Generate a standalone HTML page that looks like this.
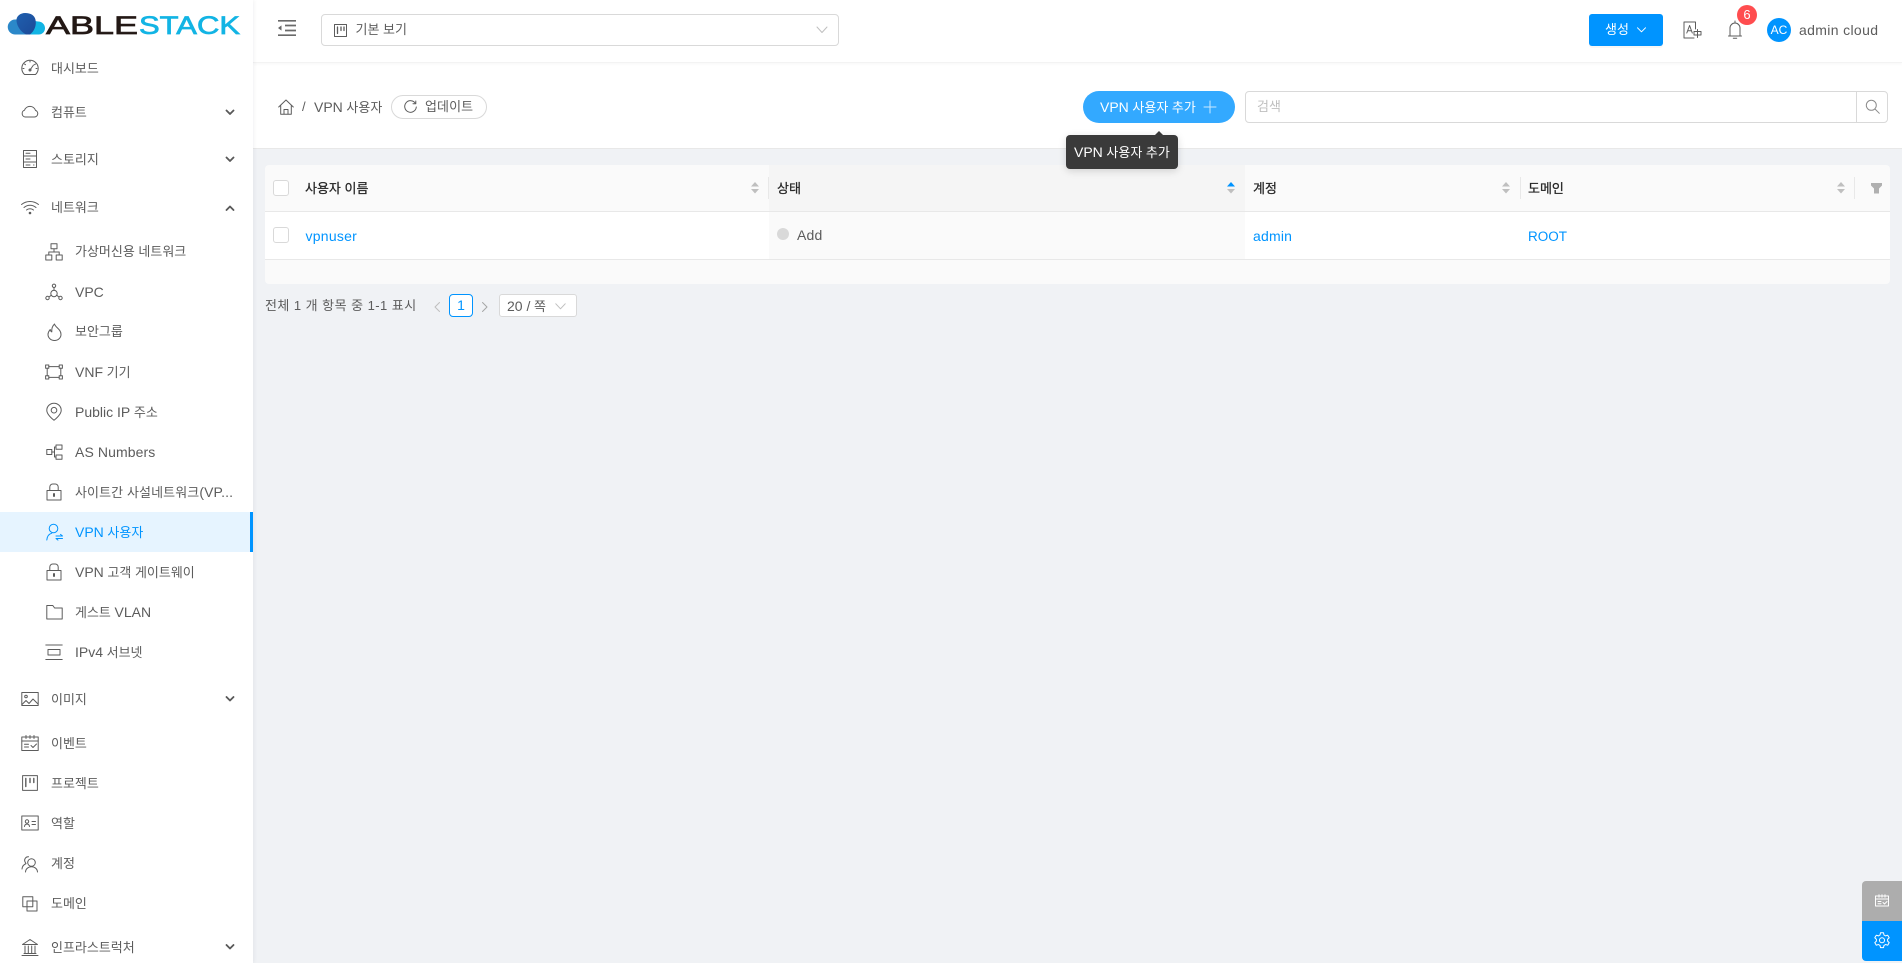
<!DOCTYPE html>
<html lang="ko"><head><meta charset="utf-8"><title>VPN 사용자</title>
<style>
*{box-sizing:border-box}
html,body{margin:0;padding:0;width:1902px;height:963px;overflow:hidden;background:#f0f2f5;font-family:"Liberation Sans","Noto Sans CJK KR",sans-serif;font-size:13px;color:#5c5c5c}
.a,.t,svg.i{position:absolute}
.t{line-height:20px;height:20px;white-space:nowrap}
.l{font-size:14px}
svg.i{fill:none;stroke:#5c5c5c;stroke-width:1;stroke-linecap:round;stroke-linejoin:round;overflow:visible}
.blue{color:#0094ff}
.h{color:#262626;font-weight:400;-webkit-text-stroke:.25px #262626}
</style></head><body>

<!-- main panels -->
<div class="a" style="left:253px;top:62px;width:1649px;height:87px;background:#fff;border-bottom:1px solid #e8e8e8"></div>
<div class="a" style="left:253px;top:0;width:1649px;height:63px;background:#fff;border-bottom:1px solid #f3f3f3;box-shadow:0 1px 3px rgba(0,21,41,.04)"></div>

<!-- sidebar -->
<div class="a" style="left:0;top:0;width:253px;height:963px;background:#fff;box-shadow:1px 0 4px rgba(0,21,41,.06)"></div>
<div class="a" style="left:0;top:512px;width:253px;height:40px;background:#e6f4ff"></div>
<div class="a" style="left:250px;top:512px;width:3px;height:40px;background:#0094ff"></div>

<!-- logo -->
<svg class="a" style="left:0;top:0" width="250" height="50">
<defs><linearGradient id="g" x1="0" y1="0" x2="1" y2="1"><stop offset="0" stop-color="#1f5fae"/><stop offset="1" stop-color="#1c4a98"/></linearGradient></defs>
<path d="M24 34.500H15.500a7.500 7.500 0 0 1-.5-15c3-.3 5.500.5 7.500 2.500l5 12.500z" fill="#2b88c9"/>
<path d="M26 34.500h12.500a6.300 6.300 0 0 0 6.500-6.300 6.800 6.800 0 0 0-7-6.700l-6-1z" fill="#12b4e4"/>
<path d="M16.500 21c-.5-4.800 3.800-8 8.500-8 6 0 9.500 2.500 10.500 6.800 1.200 5.500-1 11.200-5.500 14.700h-4c-5-2.500-9-8-9.500-13.500z" fill="url(#g)"/>
<text x="46" y="34" font-family="Liberation Sans" font-size="25" fill="#231815" stroke="#231815" stroke-width=".7" textLength="92" lengthAdjust="spacingAndGlyphs">ABLE</text>
<text x="139" y="34" font-family="Liberation Sans" font-size="25" fill="#12b4e4" stroke="#12b4e4" stroke-width=".7" textLength="101" lengthAdjust="spacingAndGlyphs">STACK</text>
</svg>

<!-- sidebar labels -->
<div class="t" style="left:51px;top:59px">대시보드</div>
<div class="t" style="left:51px;top:103px">컴퓨트</div>
<div class="t" style="left:51px;top:150px">스토리지</div>
<div class="t" style="left:51px;top:198px">네트워크</div>
<div class="t" style="left:75px;top:242px">가상머신용 네트워크</div>
<div class="t l" style="left:75px;top:282px">VPC</div>
<div class="t" style="left:75px;top:322px">보안그룹</div>
<div class="t" style="left:75px;top:362px"><span class="l">VNF</span> 기기</div>
<div class="t" style="left:75px;top:402px"><span class="l">Public IP</span> 주소</div>
<div class="t l" style="left:75px;top:442px;letter-spacing:.1px">AS Numbers</div>
<div class="t" style="left:75px;top:482px;letter-spacing:.1px">사이트간 사설네트워크<span class="l">(VP...</span></div>
<div class="t blue" style="left:75px;top:522px"><span class="l">VPN</span> 사용자</div>
<div class="t" style="left:75px;top:562px"><span class="l">VPN</span> 고객 게이트웨이</div>
<div class="t" style="left:75px;top:602px">게스트 <span class="l">VLAN</span></div>
<div class="t" style="left:75px;top:642px"><span class="l">IPv4</span> 서브넷</div>
<div class="t" style="left:51px;top:690px">이미지</div>
<div class="t" style="left:51px;top:734px">이벤트</div>
<div class="t" style="left:51px;top:774px">프로젝트</div>
<div class="t" style="left:51px;top:814px">역할</div>
<div class="t" style="left:51px;top:854px">계정</div>
<div class="t" style="left:51px;top:894px">도메인</div>
<div class="t" style="left:51px;top:938px">인프라스트럭처</div>

<!-- chevrons -->
<svg class="a" style="left:0;top:0" width="253" height="963" fill="none" stroke="#595959" stroke-width="1.800" stroke-linecap="round" stroke-linejoin="round">
<path d="M226.500 110.500l3.500 3.500 3.500-3.500M226.500 157.500l3.500 3.500 3.500-3.500M226.500 210l3.500-3.500 3.500 3.500M226.500 697l3.500 3.500 3.500-3.500M226.500 945l3.500 3.500 3.500-3.500"/>
</svg>

<!-- top-level icons -->
<svg class="i" style="left:21px;top:58px" width="18" height="18" viewBox="0 0 18 18"><path d="M3.500 16.500h11a8.200 8.200 0 1 0-11 0z"/><path d="M9 12l3.500-5M9 3v1M3.500 6l1 .7M14.500 6l-1 .7M2 10.500h1M15 10.500h1"/><circle cx="9" cy="12" r="1"/></svg>
<svg class="i" style="left:21px;top:102px" width="18" height="18" viewBox="0 0 18 18"><path d="M4.500 15h9a3.400 3.400 0 0 0 1-6.600 5.800 5.800 0 0 0-11-.2A3.500 3.500 0 0 0 4.500 15z"/></svg>
<svg class="i" style="left:21px;top:150px" width="18" height="18" viewBox="0 0 18 18"><rect x="2.500" y=".5" width="13" height="17"/><path d="M2.500 6h13M2.500 12h13M5 3.300h4M5 9h4M5 15h4M12.500 15h.5"/></svg>
<svg class="i" style="left:21px;top:198px" width="18" height="18" viewBox="0 0 18 18"><path d="M.5 6.500c5-4 12-4 17 0M3 9.500c3.500-3 8.500-3 12 0M5.500 12c2-1.700 5-1.700 7 0"/><circle cx="9" cy="15" r=".8" fill="#595959"/></svg>
<svg class="i" style="left:21px;top:690px" width="18" height="18" viewBox="0 0 18 18"><rect x=".8" y="2.500" width="16.400" height="13"/><path d="M1 14.500l4-4 3 3 4-4.500 5 5"/><circle cx="5" cy="6.500" r="1.300"/></svg>
<svg class="i" style="left:21px;top:734px" width="18" height="18" viewBox="0 0 18 18"><rect x=".8" y="3" width="16.400" height="13.500"/><path d="M.8 7h16.400M5 1.500v3M9 1.500v3M13 1.500v3M3.500 10.300h4M3.500 13h4M10 11.500l2 2 3.500-3.500"/></svg>
<svg class="i" style="left:22px;top:775px" width="16" height="16" viewBox="0 0 16 16"><rect x=".6" y=".6" width="14.800" height="14.800"/><path d="M3.800 3.500v8M8 3.500v4M11.800 3.500v4" stroke-width="1.400"/></svg>
<svg class="i" style="left:21px;top:814px" width="18" height="18" viewBox="0 0 18 18"><rect x=".8" y="2" width="16.400" height="14"/><circle cx="6" cy="7.500" r="1.700"/><path d="M3.500 12.500c.3-3.200 4.700-3.200 5 0M11 7.500h3.500M11 10.500h3.500"/></svg>
<svg class="i" style="left:21px;top:855px" width="18" height="18" viewBox="0 0 18 18"><circle cx="10.500" cy="7.500" r="3.800"/><path d="M4.500 17c.5-7 11.500-7 12 0M7.500 1.800a3.500 3.500 0 0 0-3.500 5c.3.800.8 1.300 1 1.800-2.500 1-3.800 3-4 5.400"/></svg>
<svg class="i" style="left:22px;top:896px" width="16" height="16" viewBox="0 0 16 16"><rect x=".8" y=".8" width="10" height="10"/><rect x="5" y="5" width="10" height="10"/></svg>
<svg class="i" style="left:21px;top:938px" width="18" height="18" viewBox="0 0 18 18"><path d="M1.500 6.500L9 1.500l7.500 5zM1 17.500h16M3 15.500h12M4 8v7M7.300 8v7M10.700 8v7M14 8v7"/></svg>

<!-- sub icons -->
<svg class="i" style="left:45px;top:243px" width="18" height="18" viewBox="0 0 18 18"><rect x="6" y=".8" width="6" height="5"/><rect x=".8" y="12" width="6" height="5"/><rect x="11.200" y="12" width="6" height="5"/><path d="M9 6v3M3.800 12V9h10.400v3"/></svg>
<svg class="i" style="left:45px;top:283px" width="18" height="18" viewBox="0 0 18 18"><circle cx="9" cy="2.800" r="1.700"/><circle cx="9" cy="10.500" r="3.200"/><circle cx="2.500" cy="15" r="1.700"/><circle cx="15.500" cy="15" r="1.700"/><path d="M9 4.500v3M6.200 12.300L4 14M11.800 12.300L14 14"/></svg>
<svg class="i" style="left:46px;top:323px" width="17" height="18" viewBox="0 0 17 18"><path d="M8.500 1c.8 3.500 6.500 5 6.500 10.500a6.500 6 0 0 1-13 0c0-2.500 1.300-3.800 2.200-5 .2 1.200.7 1.900 1.600 2.400C5.500 6 6.500 3 8.500 1z"/></svg>
<svg class="i" style="left:45px;top:363px" width="18" height="18" viewBox="0 0 18 18"><rect x=".6" y="2" width="3.200" height="3.200"/><rect x="14.200" y="2" width="3.200" height="3.200"/><rect x=".6" y="12.800" width="3.200" height="3.200"/><rect x="14.200" y="12.800" width="3.200" height="3.200"/><path d="M3.800 3.600h10.400M3.800 14.400h10.400M2.200 5.200v7.600M15.800 5.200v7.600"/></svg>
<svg class="i" style="left:46px;top:403px" width="16" height="18" viewBox="0 0 16 18"><path d="M8 17.300C3 13.200 .8 10.200.8 7.200a7.200 7 0 0 1 14.400 0c0 3-2.200 6-7.200 10.100z"/><circle cx="8" cy="7.200" r="2.800"/></svg>
<svg class="i" style="left:46px;top:443px" width="17" height="18" viewBox="0 0 17 18"><rect x=".8" y="6.500" width="5" height="5"/><rect x="10" y="2" width="6" height="4.200"/><rect x="10" y="12" width="6" height="4.200"/><path d="M5.800 9h2.700M8.500 4v10M8.500 4H10M8.500 14H10"/></svg>
<svg class="i" style="left:46px;top:483px" width="16" height="18" viewBox="0 0 16 18"><rect x="1" y="7.500" width="14" height="9.500"/><path d="M3.800 7.500V4a3 3 0 0 1 3-3h2.400a3 3 0 0 1 3 3v3.500"/><path d="M8 11v2" stroke-width="2"/></svg>
<svg class="i" style="left:46px;top:523px;stroke:#0094ff" width="17" height="18" viewBox="0 0 17 18"><circle cx="7.500" cy="5.500" r="4.300"/><path d="M.8 17c.3-3.600 2.400-6 5-6.800M10 13h6.500l-2-1.600M16.500 15.500H10l2 1.600"/></svg>
<svg class="i" style="left:46px;top:563px" width="16" height="18" viewBox="0 0 16 18"><rect x="1" y="7.500" width="14" height="9.500"/><path d="M3.800 7.500V4a3 3 0 0 1 3-3h2.400a3 3 0 0 1 3 3v3.500"/><path d="M8 11v2" stroke-width="2"/></svg>
<svg class="i" style="left:46px;top:604px" width="17" height="16" viewBox="0 0 17 16"><path d="M.8 1.500h6l1.800 2.500h7.600v11H.8z"/></svg>
<svg class="i" style="left:45px;top:643px" width="18" height="18" viewBox="0 0 18 18"><path d="M.8 2h16.400M.8 16.500h16.400"/><rect x="3" y="6.500" width="12" height="5.500"/></svg>

<!-- header -->
<svg class="i" style="left:278px;top:20px" width="18" height="16" viewBox="0 0 18 16"><path d="M0 .8h18M0 15.200h18M7 5.500h11M7 10.500h11" stroke-width="1.700" stroke="#6a6a6a" stroke-linecap="butt"/><path d="M0 8l3.500-2.600v5.200z" fill="#666" stroke="none"/></svg>
<div class="a" style="left:321px;top:14px;width:518px;height:32px;background:#fff;border:1px solid #d9d9d9;border-radius:4px"></div>
<svg class="i" style="left:334px;top:24px" width="13" height="13" viewBox="0 0 13 13"><rect x=".5" y=".5" width="12" height="12"/><path d="M3.500 3v6.500M7 3v3.500M10 3v3.500" stroke-width="1.300"/></svg>
<div class="t" style="left:355.500px;top:20px">기본 보기</div>
<svg class="i" style="left:816px;top:26px;stroke:#bfbfbf" width="12" height="8" viewBox="0 0 12 8"><path d="M1 1l5 5.500L11 1"/></svg>

<div class="a" style="left:1589px;top:14px;width:74px;height:32px;background:#0094ff;border-radius:3px;box-shadow:0 2px 0 rgba(0,0,0,.03)"></div>
<div class="t" style="left:1605px;top:20px;color:#fff">생성</div>
<svg class="i" style="left:1637px;top:27px;stroke:#fff" width="9" height="6" viewBox="0 0 9 6"><path d="M.5.800l4 4 4-4"/></svg>

<svg class="i" style="left:1683px;top:21px" width="19" height="18" viewBox="0 0 19 18"><path d="M11 17H1V1h11.500v7M3.800 12l2.800-7.500L9.300 12M4.800 9.800h3.600"/><path d="M11 10.500h7v3.500h-7zM14.500 8.500v8"/></svg>
<svg class="i" style="left:1727px;top:20px" width="16" height="20" viewBox="0 0 16 20"><path d="M1.500 16h13M3 16V8a5 5 0 0 1 10 0v8M8 1v2M6.300 18.300h3.400"/></svg>
<div class="a" style="left:1737px;top:5px;width:20px;height:20px;border-radius:50%;background:#ff4d4f;color:#fff;text-align:center;font-size:13px;line-height:20px">6</div>
<div class="a" style="left:1767px;top:18px;width:24px;height:24px;border-radius:50%;background:#0094ff;color:#fff;text-align:center;font-size:12px;line-height:24px">AC</div>
<div class="t l" style="left:1799px;top:20px;letter-spacing:.35px">admin cloud</div>

<!-- breadcrumb -->
<svg class="i" style="left:278px;top:99px" width="16" height="16" viewBox="0 0 16 16"><path d="M.7 8L8 1l7.300 7M2.700 6.500v8.800h10.600V6.500M6 15.300v-4.800h4v4.800"/></svg>
<div class="t" style="left:302px;top:97px">/</div>
<div class="t" style="left:314px;top:97px"><span class="l">VPN</span> 사용자</div>
<div class="a" style="left:391px;top:95px;width:96px;height:24px;background:#fff;border:1px solid #d9d9d9;border-radius:12px"></div>
<svg class="i" style="left:404px;top:100px" width="13" height="13" viewBox="0 0 13 13"><path d="M11.500 3.500A5.800 5.800 0 1 0 12.300 7M11.800 1v2.800H9"/></svg>
<div class="t" style="left:425px;top:97px;letter-spacing:.1px">업데이트</div>

<div class="a" style="left:1083px;top:91px;width:152px;height:32px;background:#33a9ff;border-radius:16px"></div>
<div class="t" style="left:1100px;top:97px;color:#fff"><span class="l">VPN</span> 사용자 추가</div>
<svg class="i" style="left:1204px;top:101px;stroke:#fff;opacity:.75" width="12" height="12" viewBox="0 0 12 12"><path d="M6 0v12M0 6h12"/></svg>

<div class="a" style="left:1245px;top:91px;width:643px;height:32px;background:#fff;border:1px solid #d9d9d9;border-radius:4px"></div>
<div class="a" style="left:1856px;top:92px;width:1px;height:30px;background:#d9d9d9"></div>
<div class="t" style="left:1257px;top:97px;color:#bfbfbf">검색</div>
<svg class="i" style="left:1865px;top:99px;stroke:#8c8c8c" width="15" height="15" viewBox="0 0 15 15"><circle cx="6.300" cy="6.300" r="5"/><path d="M10 10l4.300 4.300"/></svg>

<!-- table -->
<div class="a" style="left:265px;top:165px;width:1625px;height:119px;background:#fafafa;border-radius:4px"></div>
<div class="a" style="left:769px;top:165px;width:476px;height:47px;background:#f5f5f5"></div>
<div class="a" style="left:265px;top:212px;width:1625px;height:47px;background:#fff"></div>
<div class="a" style="left:769px;top:212px;width:476px;height:47px;background:#fafafa"></div>
<div class="a" style="left:265px;top:211px;width:1625px;height:1px;background:#e8e8e8"></div>
<div class="a" style="left:265px;top:259px;width:1625px;height:1px;background:#e8e8e8"></div>
<div class="a" style="left:768px;top:177px;width:1px;height:22px;background:#e8e8e8"></div>
<div class="a" style="left:1520px;top:177px;width:1px;height:22px;background:#e8e8e8"></div>
<div class="a" style="left:1854px;top:177px;width:1px;height:22px;background:#e8e8e8"></div>

<div class="a" style="left:273px;top:180px;width:16px;height:16px;background:#fff;border:1px solid #d9d9d9;border-radius:3px"></div>
<div class="a" style="left:273px;top:227px;width:16px;height:16px;background:#fff;border:1px solid #d9d9d9;border-radius:3px"></div>

<div class="t h" style="left:305px;top:179px">사용자 이름</div>
<div class="t h" style="left:777px;top:179px">상태</div>
<div class="t h" style="left:1253px;top:179px">계정</div>
<div class="t h" style="left:1528px;top:179px">도메인</div>

<svg class="a" style="left:0;top:0" width="1902" height="260" fill="#bfbfbf">
<path d="M751 186.500l4-4.500 4 4.500zM751 189l4 4.500 4-4.500z"/>
<path d="M1227 186.500l4-4.500 4 4.500z" fill="#0094ff"/><path d="M1227 189l4 4.500 4-4.500z"/>
<path d="M1502 186.500l4-4.500 4 4.500zM1502 189l4 4.500 4-4.500z"/>
<path d="M1837 186.500l4-4.500 4 4.500zM1837 189l4 4.500 4-4.500z"/>
<path d="M1871 183h11v2.500l-3 3v5h-5v-5l-3-3z" fill="#b0b0b0"/>
</svg>

<div class="t l blue" style="left:305.500px;top:226px;letter-spacing:.25px">vpnuser</div>
<div class="a" style="left:777px;top:228px;width:12px;height:12px;border-radius:50%;background:#d9d9d9"></div>
<div class="t l" style="left:797px;top:225px;letter-spacing:.2px">Add</div>
<div class="t l blue" style="left:1253px;top:226px;letter-spacing:.2px">admin</div>
<div class="t l blue" style="left:1528px;top:226px;font-size:13.500px;line-height:21px">ROOT</div>

<!-- pagination -->
<div class="t" style="left:265px;top:296px;letter-spacing:.46px">전체 1 개 항목 중 1-1 표시</div>
<svg class="i" style="left:433px;top:302px;stroke:#bfbfbf" width="8" height="10" viewBox="0 0 8 10"><path d="M6.500.5L2 5l4.500 4.500"/></svg>
<div class="a" style="left:449px;top:294px;width:24px;height:23px;background:#fff;border:1px solid #0094ff;border-radius:4px;color:#0094ff;text-align:center;font-size:14px;line-height:21px">1</div>
<svg class="i" style="left:481px;top:302px;stroke:#a6a6a6" width="8" height="10" viewBox="0 0 8 10"><path d="M1.500.5L6 5 1.500 9.500"/></svg>
<div class="a" style="left:499px;top:294px;width:78px;height:23px;background:#fff;border:1px solid #d9d9d9;border-radius:3px"></div>
<div class="t" style="left:507px;top:296px"><span class="l">20 /</span> 쪽</div>
<svg class="i" style="left:555px;top:303px;stroke:#bfbfbf" width="11" height="7" viewBox="0 0 11 7"><path d="M.8.800l4.700 5 4.700-5"/></svg>

<!-- tooltip -->
<div class="a" style="left:1154px;top:131px;width:0;height:0;border-left:5px solid transparent;border-right:5px solid transparent;border-bottom:5px solid #3a3a3a"></div>
<div class="a" style="left:1066px;top:135px;width:112px;height:34px;background:#3a3a3a;border-radius:4px;box-shadow:0 2px 8px rgba(0,0,0,.15)"></div>
<div class="t" style="left:1074px;top:142px;color:#fff"><span class="l">VPN</span> 사용자 추가</div>

<!-- floating buttons -->
<div class="a" style="left:1862px;top:881px;width:40px;height:40px;background:#adadad;border-radius:4px 0 0 0"></div>
<div class="a" style="left:1862px;top:921px;width:40px;height:40px;background:#0094ff;border-radius:0 0 0 4px"></div>
<svg class="i" style="left:1875px;top:894px;stroke:#fff" width="14" height="14" viewBox="0 0 14 14"><rect x=".5" y="2" width="13" height="10"/><path d="M.5 5h13M4 .8v2.500M7 .8v2.500M10 .8v2.500M3 7.500h3M3 9.800h3M8 8.500l1.500 1.500 2.500-2.500"/></svg>
<svg class="i" style="left:1874px;top:932px;stroke:#fff" width="16" height="16" viewBox="0 0 16 16"><path d="M6.500.8h3l.5 2.200 1.600.9 2.100-.7 1.500 2.600-1.600 1.500v1.800l1.600 1.500-1.500 2.600-2.100-.7-1.600.9-.5 2.200h-3l-.5-2.200-1.600-.9-2.100.7L.8 10.600l1.600-1.500V7.300L.8 5.800l1.500-2.600 2.100.7L6 3z"/><circle cx="8" cy="8.200" r="2.500"/></svg>

</body></html>
